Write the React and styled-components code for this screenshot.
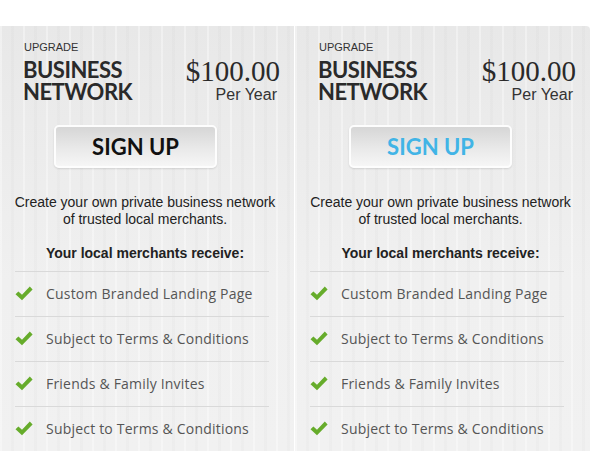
import React from "react";
import styled, { createGlobalStyle } from "styled-components";

const Global = createGlobalStyle`
  body {
    margin: 0;
    background: #fff;
    font-family: "Liberation Sans", Arial, sans-serif;
  }
`;

const Page = styled.div`
  padding-top: 26px;
  display: grid;
  grid-template-columns: 294px 295px;
  column-gap: 1px;
  width: 590px;
`;

const Panel = styled.div`
  padding-top: 14px;
  background-color: #ececec;
  background-image:
    repeating-linear-gradient(
      90deg,
      rgba(255, 255, 255, 0.35) 0 2px,
      rgba(255, 255, 255, 0) 2px 11px,
      rgba(0, 0, 0, 0.015) 11px 14px,
      rgba(255, 255, 255, 0) 14px 23px
    ),
    linear-gradient(#e8e8e8, #f0f0f0 60%, #f1f1f1);
  border-top-right-radius: ${(p) => (p.$last ? "4px" : "0")};
`;

const Header = styled.div`
  display: flex;
  justify-content: space-between;
  padding: 0 14px 0 23px;
`;

const Kicker = styled.div`
  font-size: 11px;
  line-height: 14px;
  color: #333;
  margin-left: 1px;
`;

const Title = styled.div`
  margin-top: 5px;
  font-family: Lato, "Open Sans", sans-serif;
  font-weight: 700;
  font-size: 22px;
  line-height: 22px;
  letter-spacing: -0.5px;
  color: #2a2a2a;
`;

const Price = styled.div`
  margin-top: 16px;
  text-align: right;
`;

const Amount = styled.div`
  font-family: "Liberation Serif", "Times New Roman", serif;
  font-size: 29px;
  line-height: 30px;
  color: #2a2a2a;
`;

const Period = styled.div`
  font-size: 16px;
  line-height: 18px;
  color: #333;
  margin-right: 3px;
`;

const SignUp = styled.button`
  display: block;
  margin: 21px 0 0 54px;
  width: 163px;
  height: 43px;
  border: 2px solid #fdfdfd;
  border-radius: 5px;
  background: linear-gradient(#d6d6d6, #e9e9e9 55%, #f6f6f6);
  box-shadow: 0 1px 2px rgba(0, 0, 0, 0.12);
  font-family: Lato, "Open Sans", sans-serif;
  font-weight: 700;
  font-size: 22px;
  color: ${(p) => (p.$accent ? "#41b4e6" : "#111")};
  cursor: pointer;
  padding: 0;
`;

const Description = styled.p`
  margin: 26px 12px 0 8px;
  font-size: 14px;
  line-height: 17px;
  color: #222;
  text-align: center;
`;

const Receive = styled.div`
  margin: 17px 12px 0 8px;
  font-size: 14px;
  line-height: 17px;
  font-weight: 700;
  color: #222;
  text-align: center;
`;

const List = styled.ul`
  list-style: none;
  margin: 9px 0 0 15px;
  padding: 0;
  width: 254px;
`;

const Item = styled.li`
  display: flex;
  align-items: center;
  height: 44px;
  border-top: 1px solid #d9d9d9;
  font-family: "Open Sans", "DejaVu Sans", sans-serif;
  font-size: 14px;
  line-height: 20px;
  color: #555;
  letter-spacing: 0.2px;
`;

const Check = styled.svg`
  width: 18px;
  height: 15px;
  margin: -2px 13px 0 0;
  flex: none;
`;

const features = [
  "Custom Branded Landing Page",
  "Subject to Terms & Conditions",
  "Friends & Family Invites",
  "Subject to Terms & Conditions",
];

const CheckIcon = () => (
  <Check viewBox="0 0 18 15">
    <path d="M0.5 8.2 L3.4 5.4 L7 8.8 L14.8 0.6 L17.6 3.4 L7 14.2 Z" fill="#66ac2b" />
  </Check>
);

const Plan = ({ accent, last }) => (
  <Panel $last={last}>
    <Header>
      <div>
        <Kicker>UPGRADE</Kicker>
        <Title>
          BUSINESS
          <br />
          NETWORK
        </Title>
      </div>
      <Price>
        <Amount>$100.00</Amount>
        <Period>Per Year</Period>
      </Price>
    </Header>
    <SignUp $accent={accent}>SIGN UP</SignUp>
    <Description>
      Create your own private business network
      <br />
      of trusted local merchants.
    </Description>
    <Receive>Your local merchants receive:</Receive>
    <List>
      {features.map((f, i) => (
        <Item key={i}>
          <CheckIcon />
          {f}
        </Item>
      ))}
    </List>
  </Panel>
);

export default function App() {
  return (
    <>
      <Global />
      <Page>
        <Plan />
        <Plan accent last />
      </Page>
    </>
  );
}
